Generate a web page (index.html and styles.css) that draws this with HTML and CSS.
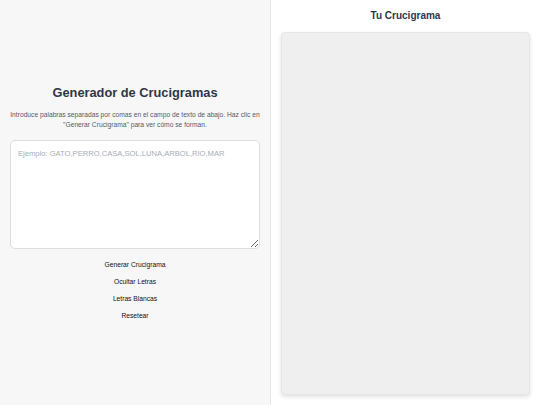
FILE: index.html
```html
<!DOCTYPE html>
<html lang="es">
<head>
<meta charset="utf-8">
<title>Generador de Crucigramas</title>
<link rel="stylesheet" href="styles.css">
</head>
<body>
<div class="app">
  <section class="controls">
    <h1 class="title">Generador de Crucigramas</h1>
    <p class="intro">Introduce palabras separadas por comas en el campo de texto de abajo. Haz clic en "Generar Crucigrama" para ver cómo se forman.</p>
    <textarea class="words" placeholder="Ejemplo: GATO,PERRO,CASA,SOL,LUNA,ARBOL,RIO,MAR"></textarea>
    <div class="actions">
      <button class="action">Generar Crucigrama</button>
      <button class="action">Ocultar Letras</button>
      <button class="action">Letras Blancas</button>
      <button class="action">Resetear</button>
    </div>
  </section>
  <section class="board">
    <h2 class="board-title">Tu Crucigrama</h2>
    <div class="grid"></div>
  </section>
</div>
</body>
</html>
```

FILE: styles.css
```css
* { box-sizing: border-box; }
html, body { margin: 0; padding: 0; height: 100%; }
body {
  font-family: "Liberation Sans", Arial, sans-serif;
  background: #ffffff;
}
.app {
  display: flex;
  height: 405px;
}
.controls {
  width: 271px;
  background: #f7f7f7;
  border-right: 1px solid #e8e8e8;
  padding: 2px 10px 0;
  display: flex;
  flex-direction: column;
  justify-content: center;
  align-items: stretch;
}
.title {
  margin: 0 0 9px;
  text-align: center;
  font-size: 12.8px;
  font-weight: bold;
  color: #2d3748;
  line-height: 16px;
}
.intro {
  margin: 0 0 10px;
  text-align: center;
  font-size: 6.7px;
  line-height: 10px;
  color: #555b66;
}
.words {
  display: block;
  width: 250px;
  height: 109px;
  resize: vertical;
  border: 1px solid #dedede;
  border-radius: 5px;
  background: #ffffff;
  padding: 8px 7px;
  font-family: "Liberation Sans", Arial, sans-serif;
  font-size: 7.6px;
  color: #333;
  margin: 0 0 10px;
}
.words::placeholder { color: #a6adb8; }
.actions {
  display: flex;
  flex-direction: column;
  align-items: center;
  gap: 5px;
}
.action {
  background: none;
  border: none;
  padding: 0;
  height: 12px;
  line-height: 12px;
  font-family: "Liberation Sans", Arial, sans-serif;
  font-size: 6.7px;
  color: #111;
}
.board {
  flex: 1;
  padding: 0 10px 10px;
  display: flex;
  flex-direction: column;
}
.board-title {
  margin: 0;
  height: 32px;
  line-height: 32px;
  text-align: center;
  font-size: 10px;
  font-weight: bold;
  color: #2d3748;
}
.grid {
  flex: 1;
  background: #efefef;
  border-radius: 4px;
  border: 1px solid #e6e6e6;
  box-shadow: 0 2px 4px rgba(0,0,0,0.12);
}
```
